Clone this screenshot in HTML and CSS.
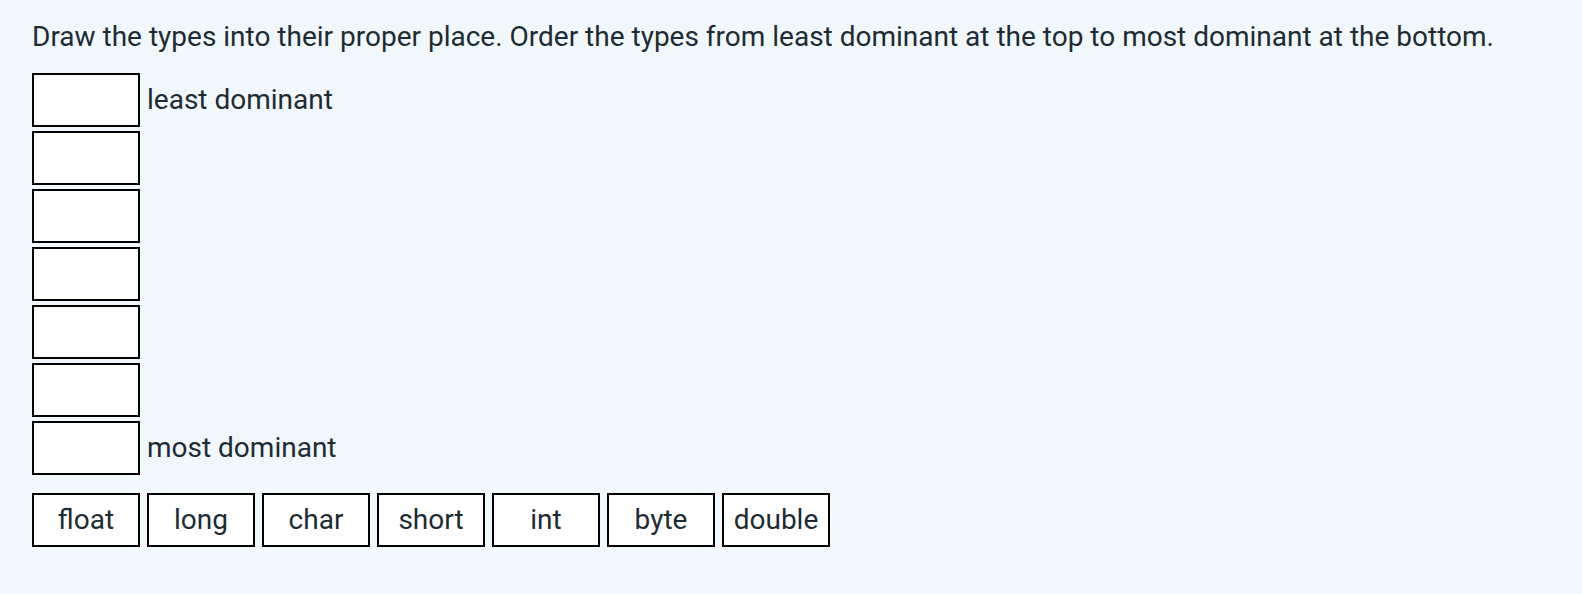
FILE: index.html
```html
<!DOCTYPE html>
<html>
<head>
<meta charset="utf-8">
<link rel="stylesheet" href="styles.css">
</head>
<body>
<div class="page">
  <p class="prompt">Draw the types into their proper place. Order the types from least dominant at the top to most dominant at the bottom.</p>
  <div class="slots">
    <div class="slot-row"><div class="slot"></div><span class="slot-label">least dominant</span></div>
    <div class="slot-row"><div class="slot"></div></div>
    <div class="slot-row"><div class="slot"></div></div>
    <div class="slot-row"><div class="slot"></div></div>
    <div class="slot-row"><div class="slot"></div></div>
    <div class="slot-row"><div class="slot"></div></div>
    <div class="slot-row"><div class="slot"></div><span class="slot-label">most dominant</span></div>
  </div>
  <div class="choices">
    <div class="choice">float</div>
    <div class="choice">long</div>
    <div class="choice">char</div>
    <div class="choice">short</div>
    <div class="choice">int</div>
    <div class="choice">byte</div>
    <div class="choice">double</div>
  </div>
</div>
</body>
</html>
```
FILE: styles.css
```css
html, body {
  margin: 0;
  padding: 0;
  background: #f1f8fb;
}
body {
  font-family: Roboto, "Liberation Sans", sans-serif;
  color: #1d2b34;
  font-size: 28px;
}
.page {
  padding: 19px 32px 0 32px;
}
.prompt {
  margin: 0 0 18px 0;
  line-height: 36px;
}
.slots {
  display: flex;
  flex-direction: column;
  gap: 4px;
}
.slot-row {
  display: flex;
  align-items: center;
  gap: 7px;
}
.slot {
  width: 108px;
  height: 54px;
  box-sizing: border-box;
  border: 2px solid #000;
  background: #fff;
}
.slot-label {
  line-height: 54px;
}
.choices {
  display: flex;
  gap: 7px;
  margin-top: 18px;
}
.choice {
  width: 108px;
  height: 54px;
  box-sizing: border-box;
  border: 2px solid #000;
  background: #fff;
  display: flex;
  align-items: center;
  justify-content: center;
  padding-bottom: 1px;
}
```
